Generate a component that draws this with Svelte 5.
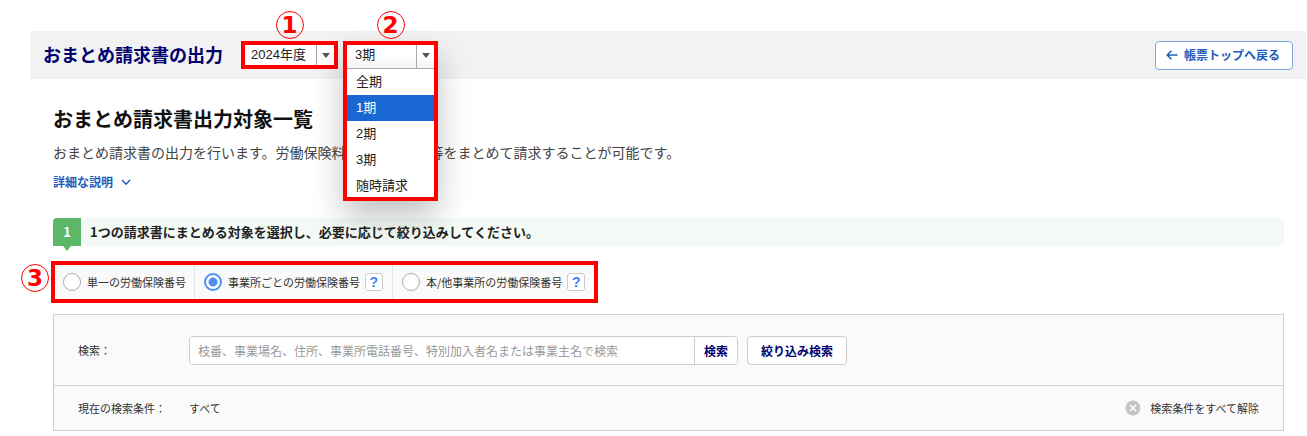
<script>
    let year = '2024年度';
    let term = '3期';
    let hovered = '1期';
    let target = 'office';
    let keyword = '';

    const terms = ['全期', '1期', '2期', '3期', '随時請求'];
    const targets = [
        { id: 'single', label: '単一の労働保険番号', help: false },
        { id: 'office', label: '事業所ごとの労働保険番号', help: true },
        { id: 'other', label: '本/他事業所の労働保険番号', help: true }
    ];

    function selectTerm(value) {
        term = value;
        hovered = value;
    }

    function clearAll() {
        keyword = '';
    }
</script>

<div class="page" lang="ja">
    <header class="bar">
        <h1>おまとめ請求書の出力</h1>
        <div class="year frame">
            <span class="mark top">1</span>
            <div class="pick">
                <select aria-label="年度" bind:value={year}>
                    <option>2024年度</option>
                    <option>2023年度</option>
                </select>
            </div>
        </div>
        <div class="term">
            <div class="frame opened">
                <span class="mark top">2</span>
                <div class="pick">
                    <select aria-label="期" bind:value={term}>
                        {#each terms as t}
                            <option>{t}</option>
                        {/each}
                    </select>
                </div>
                <ul class="menu">
                    {#each terms as t}
                        <li>
                            <button type="button" class:active={t === hovered} on:mouseenter={() => (hovered = t)} on:click={() => selectTerm(t)}>{t}</button>
                        </li>
                    {/each}
                </ul>
            </div>
        </div>
        <a class="back" href="/">
            <svg width="12" height="12" viewBox="0 0 12 12"><path d="M11.5 6H1.2M5.4 1.8 1.2 6l4.2 4.2" /></svg>
            帳票トップへ戻る
        </a>
    </header>

    <main>
        <h2>おまとめ請求書出力対象一覧</h2>
        <p class="lead">おまとめ請求書の出力を行います。労働保険料や一般拠出金等をまとめて請求することが可能です。</p>
        <button type="button" class="detail">
            詳細な説明
            <svg width="10" height="7" viewBox="0 0 10 7"><path d="M1 1l4 4.2L9 1" /></svg>
        </button>

        <div class="step">
            <span class="num">1</span>
            <strong>1つの請求書にまとめる対象を選択し、必要に応じて絞り込みしてください。</strong>
        </div>

        <div class="targets frame">
            <span class="mark side">3</span>
            {#each targets as t}
                <div class="target">
                    <label>
                        <input type="radio" name="target" value={t.id} bind:group={target}>
                        {t.label}
                    </label>
                    {#if t.help}
                        <button type="button" class="help" aria-label="ヘルプ">?</button>
                    {/if}
                </div>
            {/each}
        </div>

        <section class="panel">
            <div class="row search">
                <label class="name" for="keyword">検索：</label>
                <div class="group">
                    <input id="keyword" type="text" bind:value={keyword} placeholder="枝番、事業場名、住所、事業所電話番号、特別加入者名または事業主名で検索">
                    <button type="button">検索</button>
                </div>
                <button type="button" class="filter">絞り込み検索</button>
            </div>
            <div class="row current">
                <span class="name">現在の検索条件：</span>
                <span>すべて</span>
                <button type="button" class="clear" on:click={clearAll}>
                    <svg width="16" height="16" viewBox="0 0 16 16"><circle cx="8" cy="8" r="7.5" /><path d="M5 5l6 6M11 5l-6 6" /></svg>
                    検索条件をすべて解除
                </button>
            </div>
        </section>
    </main>
</div>

<style>
    :global(body){background:#fff;color:#333;font-family:"Noto Sans CJK JP",sans-serif;font-size:11px;line-height:16px}
    .page{padding:31px 1px 4px 30px}
    .page *{box-sizing:border-box}
    h1,h2,p,ul{margin:0;padding:0}
    button,input,select{margin:0;font-family:inherit;color:inherit}
    button{cursor:pointer}
    svg{flex:none;fill:none}

    .bar{display:flex;align-items:center;height:48px;padding:0 13px;background:#f2f2f2}
    h1{margin-right:18px;padding-bottom:2px;font-size:18px;line-height:28px;color:#00006e;white-space:nowrap}

    .frame{position:relative;border:4px solid #f00}
    .mark{position:absolute;width:28px;height:28px;border:1px solid #f00;border-radius:50%;color:#f00;font:bold 23px/27px "DejaVu Sans",sans-serif;text-align:center}
    .mark.top{top:-34px;left:50%;margin-left:-14px}
    .mark.side{top:-1px;left:-34px}

    .year{width:97px;height:28px;margin-right:5px}
    .term{width:95px;height:28px}
    .opened{z-index:10;background:#fff;box-shadow:0 16px 32px rgba(0,0,0,.24)}
    .pick{position:relative;height:20px;background:#fff}
    .opened .pick{height:24px;background:linear-gradient(#fff 50%,#f3f3f3);border-bottom:1px solid #aaa}
    .pick:after{content:"";position:absolute;top:8px;right:4px;border:4px solid transparent;border-top:5px solid #555;border-bottom:0}
    .pick:before{content:"";position:absolute;top:0;bottom:0;right:17px;border-left:1px solid #aaa}
    .pick:before,.pick:after{pointer-events:none}
    .pick select{display:block;width:100%;height:20px;padding:0 18px 0 6px;border:0;background:none;appearance:none;outline:0;color:#222;font:13px/20px "Liberation Sans","Noto Sans CJK JP",sans-serif}
    .opened select{padding-left:8px}
    .menu{height:128px;overflow:hidden;list-style:none}
    .menu button{display:block;width:100%;height:26px;padding:0 9px;border:0;background:#fff;color:#222;text-align:left;font:13px/26px "Liberation Sans","Noto Sans CJK JP",sans-serif}
    .menu button.active{background:#1967d2;color:#fff}

    .back{display:flex;align-items:center;gap:6px;height:29px;margin-left:auto;padding:0 12px 0 10px;border:1px solid #7ba7e0;border-radius:4px;background:#fff;color:#1a5dba;font-size:12px;font-weight:bold;text-decoration:none;white-space:nowrap}
    .back svg path{stroke:#1a5dba;stroke-width:1.5}

    main{padding:24px 22px 0 23px}
    h2{font-size:20px;line-height:32px;color:#111}
    .lead{margin-top:7px;font-size:14px;line-height:20px;color:#444}
    .detail{display:flex;align-items:center;gap:8px;margin-top:11px;padding:0;border:0;background:none;color:#1a5dba;font-size:12px;line-height:18px;font-weight:bold}
    .detail path{stroke:#1a5dba;stroke-width:1.5}

    .step{display:flex;align-items:center;height:28px;margin-top:27px;border-radius:4px;background:#f3faf5;color:#222;font-size:13px}
    .num{position:relative;width:28px;margin-right:9px;border-radius:4px 0 0 0;background:#5cb768;color:#fff;font-weight:bold;line-height:28px;text-align:center}
    .num:after{content:"";position:absolute;top:100%;left:10px;border:4px solid transparent;border-top:5px solid #5cb768;border-bottom:0}

    .targets{display:flex;width:fit-content;height:42px;margin:15px 0 0 -2px;background:#fafafa}
    .target{display:flex;align-items:center;gap:5px;padding:0 8px}
    .target + .target{padding:0 9px;border-left:1px solid #e4e4e4}
    .target label{display:flex;align-items:center;gap:6px;white-space:nowrap}
    .target input{width:18px;height:18px;border:1px solid #aaa;border-radius:50%;background:#fff;appearance:none}
    .target input:checked{border:2px solid #4d90f0;background:radial-gradient(circle,#4d90f0 4px,#fff 5px)}
    .help{width:18px;height:18px;padding:0;border:1px solid #ccc;border-radius:3px;background:#fff;color:#4285f4;font:bold 14px/16px "Liberation Sans",sans-serif}

    .panel{margin-top:11px;border:1px solid #d0d0d0;background:#fafafa}
    .row{display:flex;align-items:center;padding:0 24px}
    .name{width:111px}
    .search{height:70px}
    .group{display:flex;flex:0 1 549px;height:29px;margin-right:9px;border:1px solid #ccc;border-radius:4px;background:#fff;overflow:hidden}
    .group input{flex:1;min-width:0;padding:0 8px;border:0;outline:0;font-size:12px}
    .group input::placeholder{color:#999}
    .group button{padding:0 9px;border:0;border-left:1px solid #ccc;background:#fff}
    .filter{height:29px;padding:0 13px;border:1px solid #ccc;border-radius:4px;background:#fff}
    .search button{color:#00006e;font-size:12px;font-weight:bold;white-space:nowrap}
    .current{height:45px;border-top:1px solid #d0d0d0}
    .clear{display:flex;align-items:center;gap:9px;margin-left:auto;padding:0;border:0;background:none;font-size:11px}
    .clear circle{fill:#c4c4c4}
    .clear path{stroke:#fff;stroke-width:1.5}
</style>
